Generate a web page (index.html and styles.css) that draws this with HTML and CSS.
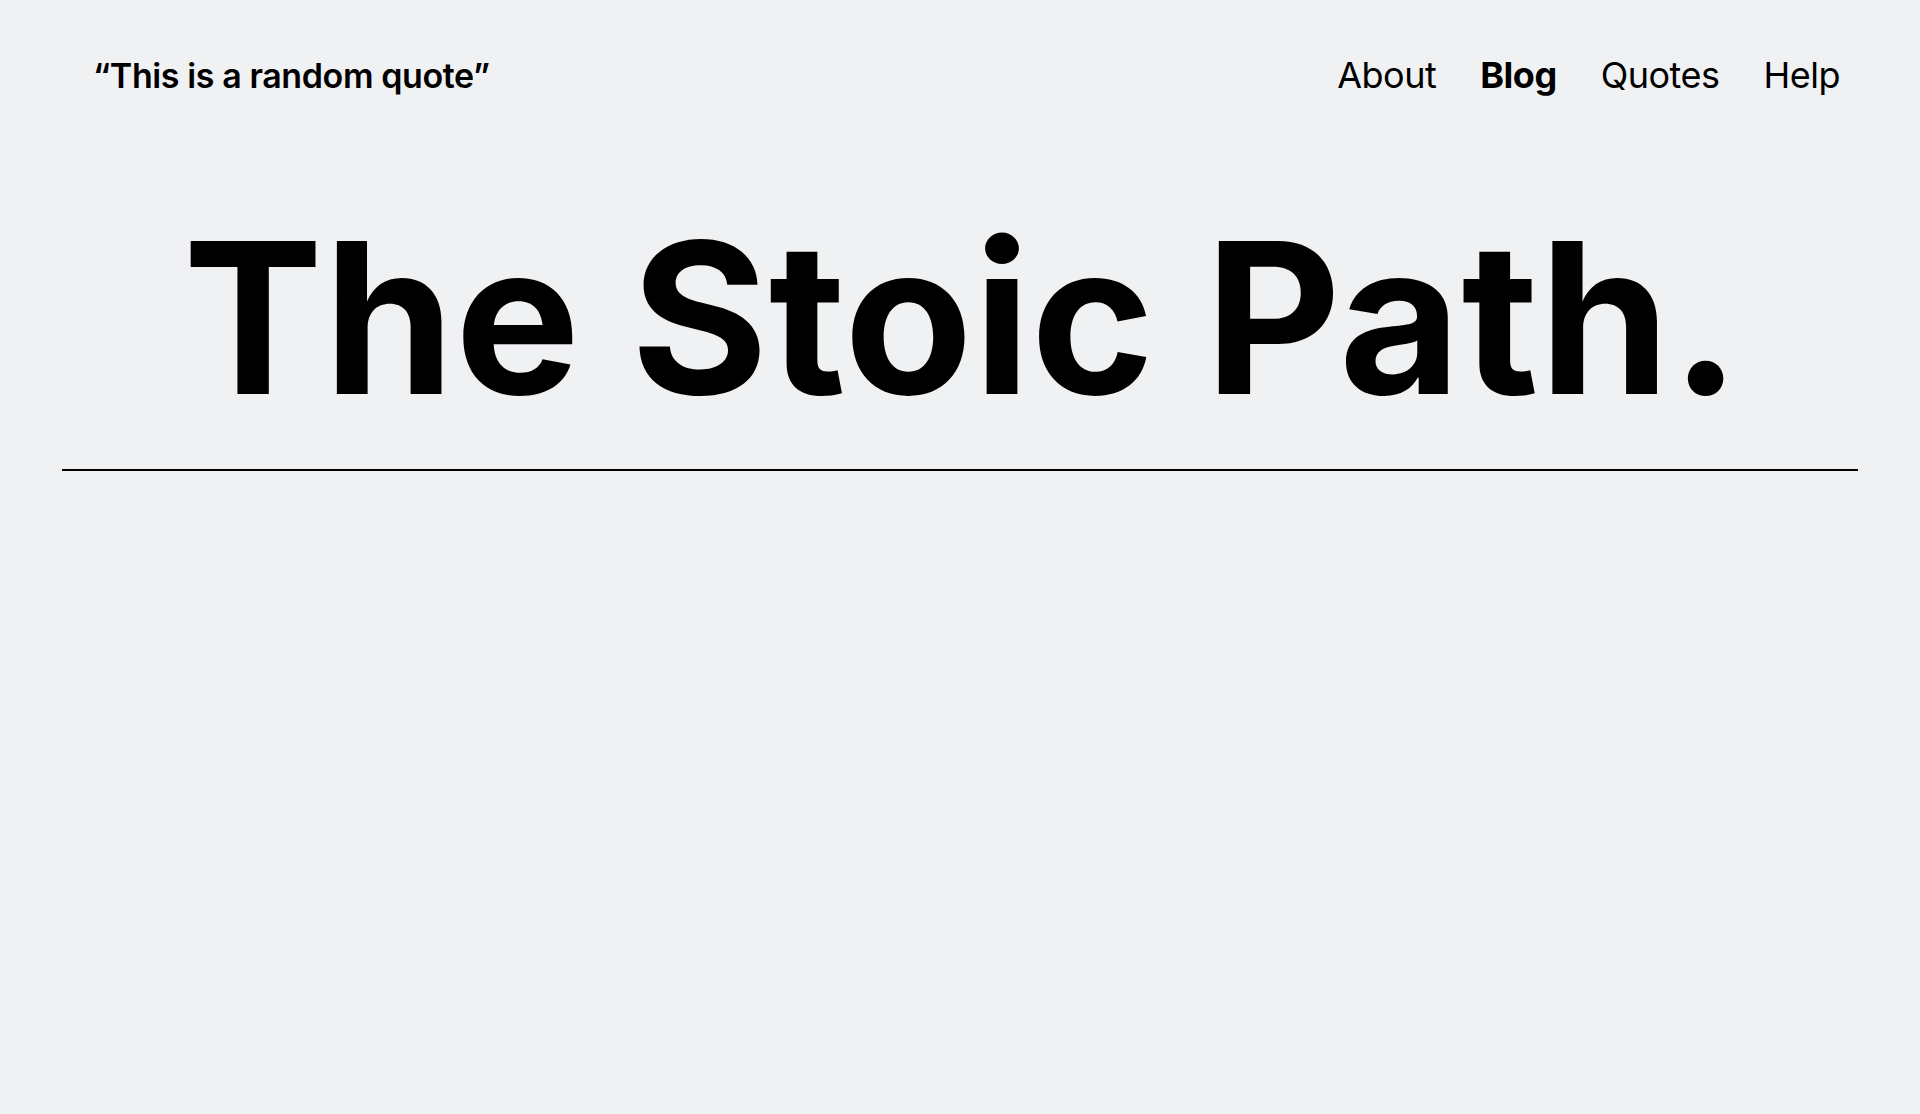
FILE: index.html
```html
<!DOCTYPE html>
<html lang="en">
<head>
<meta charset="utf-8">
<title>The Stoic Path.</title>
<link rel="stylesheet" href="styles.css">
</head>
<body>
<header class="header">
  <div class="quote">“This is a random quote”</div>
  <nav class="nav">
    <a class="nav-link" href="#">About</a>
    <a class="nav-link nav-link--active" href="#">Blog</a>
    <a class="nav-link" href="#">Quotes</a>
    <a class="nav-link" href="#">Help</a>
  </nav>
</header>
<main class="main">
  <h1 class="title">The Stoic Path.</h1>
  <hr class="rule">
</main>
</body>
</html>
```
FILE: styles.css
```css
html, body {
  margin: 0;
  padding: 0;
  background: #f0f1f3;
  color: #000;
  font-family: Inter, "Noto Sans", sans-serif;
}
.header {
  display: flex;
  justify-content: space-between;
  align-items: center;
  padding: 50px 80px 0 93px;
  height: 50px;
}
.quote {
  font-size: 34px;
  font-weight: 600;
  letter-spacing: -0.4px;
}
.nav {
  display: flex;
  gap: 44px;
}
.nav-link {
  font-size: 36px;
  font-weight: 400;
  color: #000;
  text-decoration: none;
  letter-spacing: -0.5px;
}
.nav-link--active {
  font-weight: 700;
}
.main {
  padding: 0 62px;
}
.title {
  margin: 0;
  padding: 113px 0 0 121px;
  font-size: 210px;
  font-weight: 700;
  line-height: 1;
  letter-spacing: 0.5px;
}
.rule {
  margin: 46px 0 0;
  border: 0;
  height: 2px;
  background: #000;
}
```
